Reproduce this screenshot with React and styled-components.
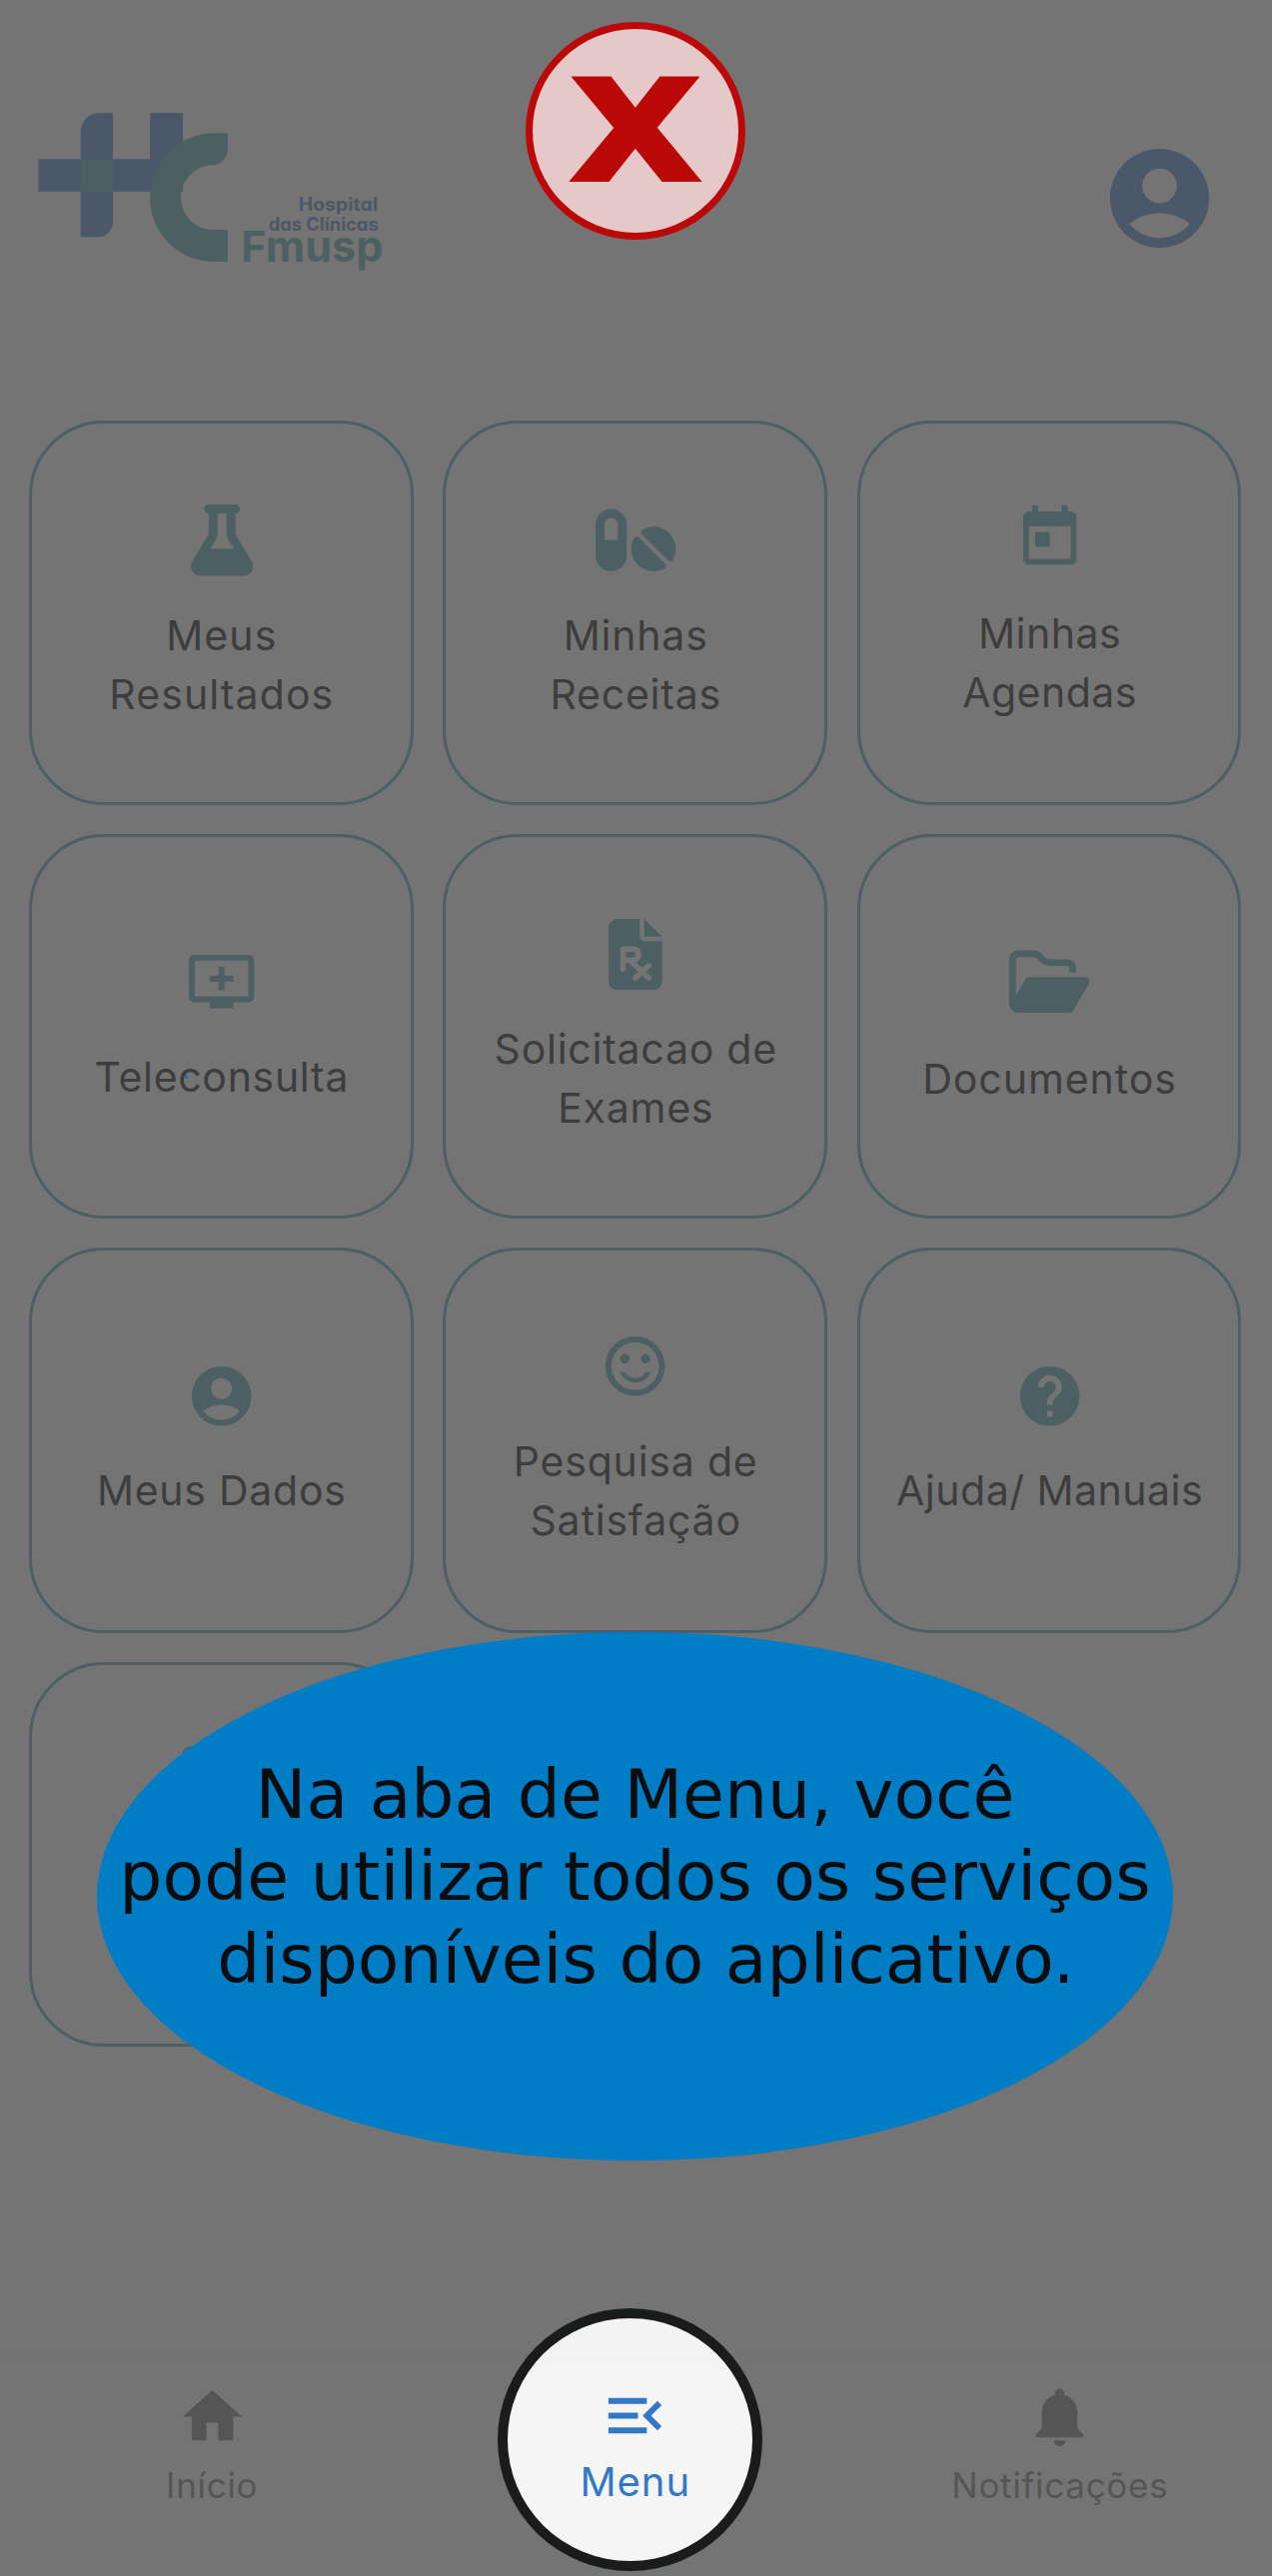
import React from "react";
import styled, { createGlobalStyle } from "styled-components";
import {
  MdAccountCircle,
  MdAddToQueue,
  MdHelp,
  MdHome,
  MdMenuOpen,
  MdNotifications,
  MdSentimentSatisfiedAlt,
  MdToday,
} from "react-icons/md";
import {
  FaFilePrescription,
  FaFlask,
  FaIdCard,
  FaPills,
  FaRegFolderOpen,
} from "react-icons/fa6";

const teal = "#4c6064";
const navy = "#4a5869";

const GlobalStyle = createGlobalStyle`
  * { box-sizing: border-box; }
  body { margin: 0; background: #747474; }
  svg { display: block; flex: none; }
`;

const Page = styled.div`
  position: relative;
  display: flex;
  flex-direction: column;
  width: 1273px;
  height: 2579px;
  overflow: hidden;
  background: #747474;
  font-family: Inter, "Liberation Sans", sans-serif;
`;

const Header = styled.header`
  display: flex;
  justify-content: space-between;
  align-items: flex-start;
  height: 420.8px;
  padding: 90px 53px 0 20px;
`;

const Avatar = styled.div`
  margin-top: 49px;
  color: ${navy};
`;

const Grid = styled.main`
  display: grid;
  grid-template-columns: repeat(3, 384.6px);
  grid-auto-rows: 385.2px;
  gap: 29.1px 29.8px;
  padding-left: 29px;
`;

const Card = styled.section`
  display: flex;
  flex-direction: column;
  align-items: center;
  gap: ${(p) => p.$gap ?? 29.9}px;
  padding-top: ${(p) => p.$top - 3}px;
  border: 3px solid ${teal};
  border-radius: 75px;
  color: ${teal};
`;

const CardIcon = styled.div`
  padding-left: 1px;

  svg {
    width: ${(p) => p.$width ?? 71.4}px;
    height: 71.4px;
  }
`;

const CardLabel = styled.div`
  padding-left: 1px;
  color: #3d3d3d;
  font-size: 41px;
  line-height: 59px;
  letter-spacing: ${(p) => p.$tracking ?? 0.75}px;
  text-align: center;
  white-space: pre-line;
`;

const NavBar = styled.nav`
  display: grid;
  grid-template-columns: repeat(3, 1fr);
  height: 217px;
  margin-top: auto;
  padding-top: 21.5px;
  background: #747474;
  box-shadow: 0 -3px 8px rgba(0, 0, 0, 0.015);
`;

const NavItem = styled.div`
  display: flex;
  flex-direction: column;
  align-items: center;
  gap: 8.7px;
  color: #555;
`;

const NavLabel = styled.span`
  font-size: ${(p) => p.$size ?? 35}px;
  line-height: 50px;
  letter-spacing: ${(p) => p.$tracking ?? 0.7}px;
`;

const CloseButton = styled.div`
  position: absolute;
  left: 526px;
  top: 22px;
  display: flex;
  align-items: center;
  justify-content: center;
  width: 220px;
  height: 218px;
  border: 7px solid #bb0808;
  border-radius: 50%;
  background: #e5c9c9;
  color: #bb0808;
`;

const CloseGlyph = styled.span`
  font: bold 192px/226px "DejaVu Sans", sans-serif;
  transform: translateY(-15px) scaleX(1.13);
`;

const Callout = styled.div`
  position: absolute;
  left: 97px;
  top: 1633.5px;
  display: flex;
  justify-content: center;
  width: 1077px;
  height: 529.5px;
  padding-top: 122.5px;
  border-radius: 50%;
  background: #017dc5;
`;

const CalloutText = styled.p`
  margin: 0;
  color: #0a0c0e;
  font-family: "DejaVu Sans", sans-serif;
  font-size: 68px;
  line-height: 82.3px;
  text-align: center;
  white-space: pre;
`;

const Spotlight = styled.div`
  position: absolute;
  left: 498px;
  top: 2310.5px;
  display: flex;
  flex-direction: column;
  align-items: center;
  gap: 5.9px;
  width: 264.5px;
  height: 263px;
  padding: 62.5px 0 0 11px;
  border: 10px solid #1a1c1b;
  border-radius: 50%;
  background: linear-gradient(#f3f3f3 0, #f3f3f3 42px, #f5f5f5 43px);
  color: #3178c6;
`;

const Speck = styled.i`
  position: absolute;
  left: 185px;
  top: 1076px;
  width: 3px;
  height: 4px;
  border-radius: 50%;
  background: #017dc5;
`;

const Wordmark = styled.text`
  font-family: Inter, sans-serif;
  font-weight: ${(p) => p.$weight};
  font-feature-settings: "cv11";
`;

const Logo = () => (
  <svg width="380" height="200" viewBox="0 0 1140 600">
    <g fill={navy}>
      <path d="M279 69H238A56 56 0 0 0 182 125V442H232A47 47 0 0 0 279 395Z" />
      <path d="M55 208H390V69H489V305H55Z" />
    </g>
    <g fill="#4c6062">
      <path d="M182 208H279V305H182Z" />
      <path d="M583 130H624V178A48 48 0 0 1 576 226A97 97 0 0 0 583 420H624V516H583A193 193 0 0 1 583 130Z" />
    </g>
    <Wordmark $weight={650} x="836" y="362" fontSize="55" textLength="238" lengthAdjust="spacingAndGlyphs" fill={navy}>Hospital</Wordmark>
    <Wordmark $weight={650} x="746" y="422" fontSize="55" textLength="330" lengthAdjust="spacingAndGlyphs" fill={navy}>das Clínicas</Wordmark>
    <Wordmark $weight={700} x="664" y="517" fontSize="129" textLength="426" lengthAdjust="spacingAndGlyphs" fill="#4c6062">Fmusp</Wordmark>
  </svg>
);

const cards = [
  { icon: FaFlask, width: 62.5, label: "Meus\nResultados", top: 84.6, tracking: 1.1 },
  { icon: FaPills, width: 80.3, label: "Minhas\nReceitas", top: 84.6, tracking: 0.8 },
  { icon: MdToday, label: "Minhas\nAgendas", top: 82.6, tracking: 0.5 },
  { icon: MdAddToQueue, label: "Teleconsulta", top: 112.2, tracking: 0.7 },
  { icon: FaFilePrescription, width: 53.6, label: "Solicitacao de\nExames", top: 84.9 },
  { icon: FaRegFolderOpen, width: 80.3, label: "Documentos", top: 111.8, gap: 32.4, tracking: 0.95 },
  { icon: MdAccountCircle, label: "Meus Dados", top: 112.2 },
  { icon: MdSentimentSatisfiedAlt, label: "Pesquisa de\nSatisfação", top: 82.9, tracking: 0.8 },
  { icon: MdHelp, label: "Ajuda/ Manuais", top: 112.2, tracking: 0.5 },
  { icon: FaIdCard, width: 80.3, label: "", top: 80.5 },
];

export default function App() {
  return (
    <Page>
      <GlobalStyle />
      <Header>
        <Logo />
        <Avatar>
          <MdAccountCircle size={119} />
        </Avatar>
      </Header>
      <Grid>
        {cards.map(({ icon: Icon, width, label, top, gap, tracking }) => (
          <Card key={label} $top={top} $gap={gap}>
            <CardIcon $width={width}>
              <Icon />
            </CardIcon>
            {label && <CardLabel $tracking={tracking}>{label}</CardLabel>}
          </Card>
        ))}
      </Grid>
      <NavBar>
        <NavItem>
          <MdHome size={71} />
          <NavLabel>Início</NavLabel>
        </NavItem>
        <span />
        <NavItem>
          <MdNotifications size={71} />
          <NavLabel>Notificações</NavLabel>
        </NavItem>
      </NavBar>
      <Speck />
      <CloseButton role="button">
        <CloseGlyph>x</CloseGlyph>
      </CloseButton>
      <Callout>
        <CalloutText>{"Na aba de Menu, você\npode utilizar todos os serviços\n disponíveis do aplicativo."}</CalloutText>
      </Callout>
      <Spotlight>
        <MdMenuOpen size={71} />
        <NavLabel $size={40} $tracking={1}>Menu</NavLabel>
      </Spotlight>
    </Page>
  );
}
